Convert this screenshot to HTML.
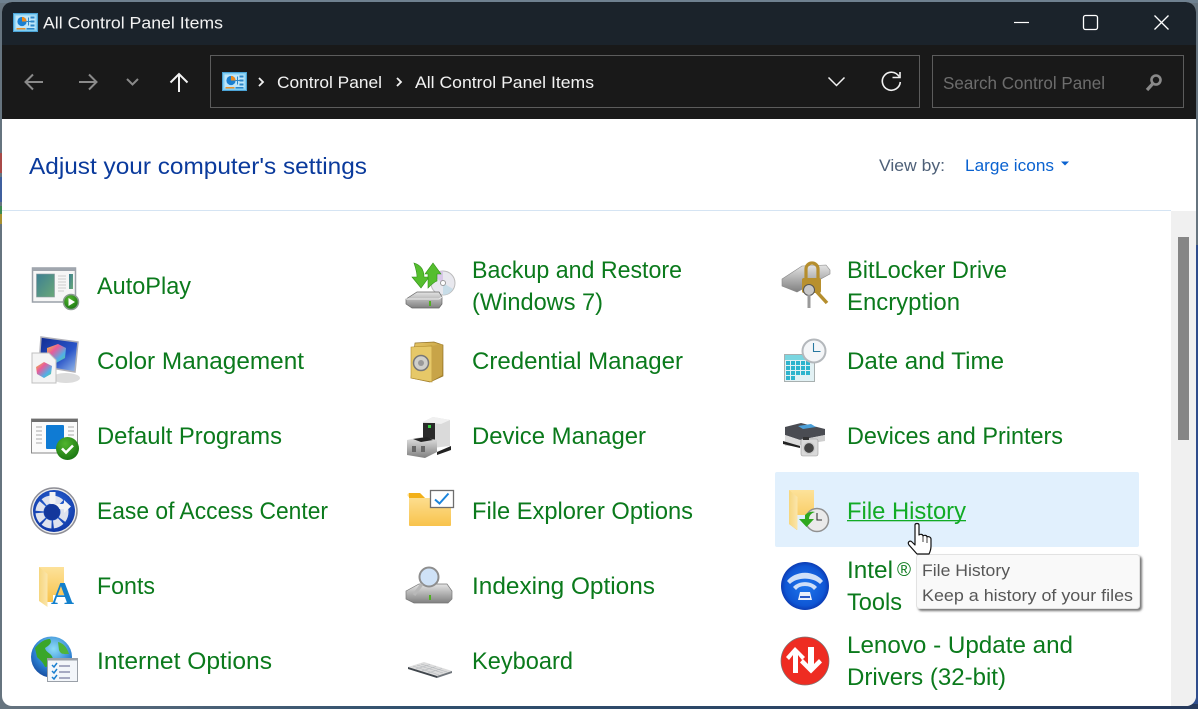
<!DOCTYPE html>
<html><head><meta charset="utf-8"><title>All Control Panel Items</title>
<style>
html,body{margin:0;padding:0;width:1198px;height:709px;overflow:hidden;background:#63717c}
svg{display:block}
text{font-family:"Liberation Sans",sans-serif}
.i{font-size:24px;fill:#0b7a1c}
.w{font-size:17px;fill:#f2f2f2}
</style></head><body>
<svg width="1198" height="709" viewBox="0 0 1198 709" xmlns="http://www.w3.org/2000/svg">
<defs>
<linearGradient id="bot" x1="0" y1="0" x2="1" y2="0"><stop offset="0" stop-color="#66747f"/><stop offset=".1" stop-color="#55687a"/><stop offset=".35" stop-color="#30506e"/><stop offset="1" stop-color="#26395c"/></linearGradient>
<linearGradient id="fold" x1="0" y1="0" x2="0" y2="1"><stop offset="0" stop-color="#fde29a"/><stop offset="1" stop-color="#f8c34c"/></linearGradient>
<linearGradient id="foldb" x1="0" y1="0" x2="1" y2="0"><stop offset="0" stop-color="#f6d67e"/><stop offset="1" stop-color="#fbe6ac"/></linearGradient>
<linearGradient id="gray" x1="0" y1="0" x2="0" y2="1"><stop offset="0" stop-color="#e4e4e4"/><stop offset="1" stop-color="#808080"/></linearGradient>
<linearGradient id="gold" x1="0" y1="0" x2="1" y2="1"><stop offset="0" stop-color="#e8c868"/><stop offset="1" stop-color="#b08a2c"/></linearGradient>
<linearGradient id="thumb" x1="0" y1="0" x2="1" y2="1"><stop offset="0" stop-color="#3d7f92"/><stop offset="1" stop-color="#6aa878"/></linearGradient>
<linearGradient id="rb" x1="0" y1="0" x2="1" y2="1"><stop offset="0" stop-color="#f0c838"/><stop offset=".35" stop-color="#e85c9a"/><stop offset=".7" stop-color="#50b0e8"/><stop offset="1" stop-color="#60d070"/></linearGradient>
<linearGradient id="mon" x1="0" y1="0" x2="1" y2="1"><stop offset="0" stop-color="#102a90"/><stop offset=".6" stop-color="#2a55c8"/><stop offset="1" stop-color="#9fc2ec"/></linearGradient>
<radialGradient id="grn" cx=".4" cy=".3" r=".8"><stop offset="0" stop-color="#52b52e"/><stop offset="1" stop-color="#14700f"/></radialGradient>
<radialGradient id="blu" cx=".5" cy=".4" r=".7"><stop offset="0" stop-color="#2f6fe0"/><stop offset="1" stop-color="#0c2f9c"/></radialGradient>
<radialGradient id="intel" cx=".5" cy=".5" r=".55"><stop offset="0" stop-color="#1f78ee"/><stop offset=".75" stop-color="#0f56d4"/><stop offset="1" stop-color="#0a2ca0"/></radialGradient>
<radialGradient id="globe" cx=".55" cy=".3" r=".8"><stop offset="0" stop-color="#8cdcf8"/><stop offset=".6" stop-color="#2a7ed0"/><stop offset="1" stop-color="#103c90"/></radialGradient>
<filter id="sh" x="-5%" y="-5%" width="112%" height="120%"><feDropShadow dx="2" dy="2" stdDeviation="1" flood-color="#555" flood-opacity=".8"/></filter>
<g id="cp">
<rect x="0" y="0" width="24" height="18" fill="#7fcdf2" stroke="#4ba3d6"/>
<rect x="2" y="2" width="20" height="14" fill="#bfe6f9"/>
<circle cx="8.5" cy="8" r="4.6" fill="#1a7fd0"/><path d="M8.5 8V3.4A4.6 4.6 0 0 1 13.1 8Z" fill="#ee8a1a"/>
<rect x="17" y="3" width="4" height="2" fill="#2c86c8"/><rect x="17" y="7" width="4" height="2" fill="#2c86c8"/><rect x="17" y="11" width="4" height="2" fill="#2c86c8"/>
<path d="M13 8h4M15 4v8" stroke="#2c86c8" fill="none"/>
<rect x="3" y="14.5" width="9" height="1.5" fill="#e8912a"/><rect x="13" y="14.5" width="8" height="1.5" fill="#2c86c8"/>
</g>
</defs>

<!-- desktop behind -->
<rect width="1198" height="709" fill="#66747f"/>
<rect x="1190" y="245" width="8" height="464" fill="#2f4d8c"/>
<rect x="0" y="704" width="1198" height="5" fill="url(#bot)"/>
<rect x="0" y="0" width="1198" height="3" fill="#6f8190"/>
<rect x="0" y="153" width="3" height="20" fill="#a84a48"/>
<rect x="0" y="177" width="3" height="25" fill="#3f5f9e"/>
<rect x="0" y="206" width="3" height="8" fill="#3c8a50"/>
<rect x="0" y="214" width="3" height="10" fill="#a89030"/>

<!-- window -->
<path d="M12 2H1186a10 10 0 0 1 10 10V696a10 10 0 0 1 -10 10H12a10 10 0 0 1 -10-10V12a10 10 0 0 1 10-10Z" fill="#fff"/>
<path d="M12 2H1186a10 10 0 0 1 10 10V45H2V12a10 10 0 0 1 10-10Z" fill="#1b232b"/>
<rect x="2" y="45" width="1194" height="74" fill="#191919"/>

<!-- title bar -->
<use href="#cp" x="13.5" y="13.5"/>
<text x="43" y="28.5" class="w" textLength="180" lengthAdjust="spacingAndGlyphs">All Control Panel Items</text>
<path d="M1014 22.500h15" stroke="#fff" stroke-width="1.200"/>
<rect x="1083.500" y="15.500" width="14" height="14" rx="2" fill="none" stroke="#fff" stroke-width="1.300"/>
<path d="M1154.500 15.500l14 14M1168.500 15.500l-14 14" stroke="#fff" stroke-width="1.300"/>

<!-- nav -->
<path d="M43 82H26M33 74.500L25.500 82l7.500 7.500" fill="none" stroke="#8a8a8a" stroke-width="2"/>
<path d="M79 82h17M89 74.500l7.500 7.500l-7.500 7.500" fill="none" stroke="#8a8a8a" stroke-width="2"/>
<path d="M127 79l5.500 5.500l5.500-5.500" fill="none" stroke="#8a8a8a" stroke-width="2"/>
<path d="M179 92V74M170.500 82.500l8.500-8.500l8.500 8.500" fill="none" stroke="#f2f2f2" stroke-width="2"/>

<rect x="210.500" y="55.500" width="709" height="52" fill="#191919" stroke="#5c5c5c"/>
<use href="#cp" x="222.500" y="72.500"/>
<path d="M259 78l4 4l-4 4" fill="none" stroke="#f2f2f2" stroke-width="1.800"/>
<text x="277" y="88" class="w" textLength="105" lengthAdjust="spacingAndGlyphs">Control Panel</text>
<path d="M397 78l4 4l-4 4" fill="none" stroke="#f2f2f2" stroke-width="1.800"/>
<text x="415" y="88" class="w" textLength="179" lengthAdjust="spacingAndGlyphs">All Control Panel Items</text>
<path d="M828.500 77.500l8 8l8-8" fill="none" stroke="#f2f2f2" stroke-width="1.500"/>
<path d="M899 76.500A9 9 0 1 0 900.300 82" fill="none" stroke="#f2f2f2" stroke-width="1.600"/>
<path d="M892.500 77.500h7.500v-5.500" fill="none" stroke="#f2f2f2" stroke-width="1.600"/>

<rect x="932.500" y="55.500" width="251" height="52" fill="#191919" stroke="#5c5c5c"/>
<text x="943" y="89" font-size="17.500" fill="#6d6d6d" textLength="162" lengthAdjust="spacingAndGlyphs">Search Control Panel</text>
<circle cx="1156" cy="80" r="4.500" fill="none" stroke="#8a8a8a" stroke-width="2.600"/>
<path d="M1152.500 84l-5.500 6" stroke="#8a8a8a" stroke-width="3.200"/>

<!-- header -->
<text x="29" y="174" font-size="23" fill="#0a3a9c" textLength="338" lengthAdjust="spacingAndGlyphs">Adjust your computer's settings</text>
<text x="879" y="171" font-size="17" fill="#4e6078" textLength="66" lengthAdjust="spacingAndGlyphs">View by:</text>
<text x="965" y="171" font-size="17" fill="#0a62d0" textLength="89" lengthAdjust="spacingAndGlyphs">Large icons</text>
<path d="M1061 161.500h8l-4 4Z" fill="#0a62d0"/>
<rect x="2" y="210" width="1169" height="1" fill="#d5e4f3"/>

<!-- scrollbar -->
<path d="M1171 211H1196V696a10 10 0 0 1-10 10H1171Z" fill="#f0f0f0"/>
<rect x="1178" y="237" width="11" height="203" fill="#868686"/>

<!-- hover -->
<rect x="775" y="472" width="364" height="75" rx="2" fill="#e1f0fd"/>

<!-- labels column 1 -->
<text x="97" y="294" class="i" textLength="94" lengthAdjust="spacingAndGlyphs">AutoPlay</text>
<text x="97" y="369" class="i" textLength="207" lengthAdjust="spacingAndGlyphs">Color Management</text>
<text x="97" y="444" class="i" textLength="185" lengthAdjust="spacingAndGlyphs">Default Programs</text>
<text x="97" y="519" class="i" textLength="231" lengthAdjust="spacingAndGlyphs">Ease of Access Center</text>
<text x="97" y="594" class="i" textLength="58" lengthAdjust="spacingAndGlyphs">Fonts</text>
<text x="97" y="669" class="i" textLength="175" lengthAdjust="spacingAndGlyphs">Internet Options</text>
<!-- column 2 -->
<text x="472" y="278" class="i" textLength="210" lengthAdjust="spacingAndGlyphs">Backup and Restore</text>
<text x="472" y="310" class="i" textLength="131" lengthAdjust="spacingAndGlyphs">(Windows 7)</text>
<text x="472" y="369" class="i" textLength="211" lengthAdjust="spacingAndGlyphs">Credential Manager</text>
<text x="472" y="444" class="i" textLength="174" lengthAdjust="spacingAndGlyphs">Device Manager</text>
<text x="472" y="519" class="i" textLength="221" lengthAdjust="spacingAndGlyphs">File Explorer Options</text>
<text x="472" y="594" class="i" textLength="183" lengthAdjust="spacingAndGlyphs">Indexing Options</text>
<text x="472" y="669" class="i" textLength="101" lengthAdjust="spacingAndGlyphs">Keyboard</text>
<!-- column 3 -->
<text x="847" y="278" class="i" textLength="160" lengthAdjust="spacingAndGlyphs">BitLocker Drive</text>
<text x="847" y="310" class="i" textLength="113" lengthAdjust="spacingAndGlyphs">Encryption</text>
<text x="847" y="369" class="i" textLength="157" lengthAdjust="spacingAndGlyphs">Date and Time</text>
<text x="847" y="444" class="i" textLength="216" lengthAdjust="spacingAndGlyphs">Devices and Printers</text>
<text x="847" y="519" class="i" style="fill:#12ab25" textLength="119" lengthAdjust="spacingAndGlyphs">File History</text>
<rect x="847" y="520" width="119" height="1.300" fill="#12ab25"/>
<text x="847" y="578" class="i" textLength="46" lengthAdjust="spacingAndGlyphs">Intel</text>
<text x="897" y="576" class="i" style="font-size:19px">®</text>
<text x="847" y="610" class="i" textLength="55" lengthAdjust="spacingAndGlyphs">Tools</text>
<text x="847" y="653" class="i" textLength="226" lengthAdjust="spacingAndGlyphs">Lenovo - Update and</text>
<text x="847" y="685" class="i" textLength="159" lengthAdjust="spacingAndGlyphs">Drivers (32-bit)</text>

<!-- AutoPlay -->
<g transform="translate(20,255)">
<rect x="12.500" y="13" width="43" height="34" fill="#f6f6f6" stroke="#9aa0a8" stroke-width="1.500"/>
<rect x="12.500" y="13" width="43" height="3" fill="#a0a6ae"/>
<rect x="16.500" y="19" width="18" height="23" fill="url(#thumb)" stroke="#8a9aa0" stroke-width=".6"/>
<path d="M38 21h8M38 24h8M38 27h8M38 30h8M38 33h8M38 36h6" stroke="#ccc"/>
<rect x="49" y="19" width="4" height="15" fill="url(#thumb)"/>
<circle cx="51" cy="47" r="7.500" fill="url(#grn)" stroke="#8a9a90" stroke-width="1.500"/>
<path d="M48.500 43l6.500 4l-6.500 4Z" fill="#fff"/>
</g>

<!-- Color Mgmt -->
<g transform="translate(20,330)">
<ellipse cx="46" cy="48" rx="14" ry="5" fill="#dcdcdc"/>
<path d="M21 7L58 12L55 42L19 36Z" fill="url(#mon)" stroke="#b0b0b8" stroke-width="1.500"/>
<path d="M27 18l11-4 8 4-1 10-9 5-9-5Z" fill="url(#rb)"/>
<path d="M12 23H29l7 7V53H12Z" fill="#f4f4f4" stroke="#c0c0c0"/>
<path d="M16 37l8-5 8 4-1 8-7 4-7-4Z" fill="url(#rb)"/>
</g>

<!-- Default programs -->
<g transform="translate(20,405)">
<rect x="11.500" y="14" width="46" height="34" fill="#fbfbfb" stroke="#8a8a8a"/>
<rect x="11.500" y="14" width="46" height="3" fill="#6e6e6e"/>
<rect x="26" y="20" width="18" height="24" rx="1" fill="#0f7bd4"/>
<path d="M16 22h6M16 26h6M16 30h6M16 34h6M16 38h6M48 22h6M48 26h6M48 30h6" stroke="#aaa"/>
<circle cx="47.500" cy="43.500" r="11.500" fill="url(#grn)"/>
<path d="M42 43.500l4 4l7-7" fill="none" stroke="#fff" stroke-width="2.600"/>
</g>

<!-- Ease of Access -->
<g transform="translate(20,480)">
<circle cx="34" cy="31" r="23" fill="#eee" stroke="#8e8e96" stroke-width="1.500"/>
<circle cx="34" cy="31" r="21" fill="url(#blu)"/>
<circle cx="32" cy="32" r="12.500" fill="none" stroke="#dfe3ee" stroke-width="8" stroke-dasharray="8 2"/>
<path d="M29.500 12h6v11l-3 3-3-3Z" fill="#f4f4f4"/>
<path d="M34 24h10v-4l7 6.500-7 6.500v-4H34Z" fill="#f4f4f4"/>
<circle cx="32" cy="32" r="8" fill="#14389c"/>
</g>

<!-- Fonts -->
<g transform="translate(20,555)">
<path d="M19 12H44V40H33V47H27Z" fill="url(#fold)"/>
<path d="M19 12l8.500 7v33L19 46Z" fill="url(#foldb)"/>
<text x="31" y="49" font-size="32" font-weight="bold" style="font-family:'Liberation Serif',serif" fill="#1380cc" textLength="23" lengthAdjust="spacingAndGlyphs">A</text>
</g>

<!-- Internet Options -->
<g transform="translate(20,630)">
<circle cx="31.500" cy="27" r="20.500" fill="url(#globe)"/>
<path d="M15 18c5-6 10-9 15-9 3 4-2 7-5 9 1 5 7 5 8 11-2 5-5 8-8 8-2-5-5-7-8-10Z" fill="#3aa62a"/>
<path d="M38 12c5 1 9 5 11 12-5 0-8 1-10-4Z" fill="#4fb43a"/>
<rect x="27.500" y="28.500" width="30" height="23" fill="#f3f6fa" stroke="#9aa0a8"/>
<rect x="27.500" y="28.500" width="30" height="2" fill="#9aa0a8"/>
<path d="M32 35l2 2 3-4M32 41l2 2 3-4M32 47l2 2 3-4" fill="none" stroke="#1a7fd0" stroke-width="1.500"/>
<path d="M39 36h11M39 42h11M39 48h11" stroke="#7a7ea0" stroke-width="1.200"/>
</g>

<!-- Backup -->
<g transform="translate(395,255)">
<circle cx="48" cy="28" r="12" fill="#e8e8ee" stroke="#bbb"/>
<path d="M48 28L38 21A12 12 0 0 1 48 16Z" fill="#d8c8e8"/><path d="M48 28L58 34A12 12 0 0 1 48 40Z" fill="#c8dde8"/>
<circle cx="48" cy="28" r="2.500" fill="#fff" stroke="#999"/>
<path d="M11 44l11-7h22l3 5v7l-3 4H17l-6-4Z" fill="url(#gray)" stroke="#666" stroke-width=".7"/>
<path d="M11 44h33l3-2" stroke="#eee" fill="none"/>
<rect x="34" y="46" width="2" height="5" fill="#4fb020"/>
<path d="M19 8c7 2 10 7 10 14h5l-8 11-9-11h5c0-4-1-8-3-14Z" fill="#55be2e" stroke="#2f8f18" stroke-width=".6"/>
<path d="M33 33V19h-3l8-11 8 11h-4v7c-3 1-6 4-9 7Z" fill="#55be2e" stroke="#2f8f18" stroke-width=".6"/>
</g>

<!-- Credential -->
<g transform="translate(395,330)">
<path d="M20 13l19-1 9 3v31l-13 6-19-4Z" fill="url(#gold)" stroke="#94752c" stroke-width=".7"/>
<path d="M16 17l21 -1v36l-21-4Z" fill="#e6c868" stroke="#b08a2c" stroke-width=".6"/>
<circle cx="26" cy="33" r="7.500" fill="#cfcfca" stroke="#777" stroke-width="1.500"/>
<circle cx="26" cy="33" r="3" fill="#999"/>
<path d="M37 16l10-2v31l-10 6Z" fill="#c8a448"/>
</g>

<!-- Device Manager -->
<g transform="translate(395,405)">
<path d="M28 17l10-5 17 3v26l-27 3Z" fill="#dadada"/>
<path d="M28 17l10-5 17 3-9 4Z" fill="#f0f0f0"/><path d="M28 18h12v24H28Z" fill="#2a2a2a"/>
<rect x="33" y="20" width="3" height="3" fill="#35d040"/>
<path d="M42 47l14-6v4l-14 5Z" fill="#222"/>
<path d="M12 35l14-3 16 3v12l-12 6-18-3Z" fill="url(#gray)"/>
<path d="M18 34l14-2 6 3-12 2Z" fill="#222"/>
<rect x="17" y="41" width="4" height="6" fill="#666"/><rect x="26" y="41" width="4" height="6" fill="#666"/>
</g>

<!-- File explorer options -->
<g transform="translate(395,480)">
<path d="M14 17a1 1 0 0 1 1-4h10l5 5h26v27a1 1 0 0 1-1 1H15a1 1 0 0 1-1-1Z" fill="url(#fold)"/>
<path d="M14 13h11l5 5h-16Z" fill="#f2b018"/>
<rect x="35.500" y="10.500" width="23" height="17" fill="#fff" stroke="#6e6e6e" stroke-width="1.300"/>
<path d="M40 19.500l4.500 4l9-10" fill="none" stroke="#1a84dc" stroke-width="2"/>
</g>

<!-- Indexing -->
<g transform="translate(395,555)">
<path d="M11 36l13-7h28l5 7v8l-4 4H19l-8-4Z" fill="url(#gray)" stroke="#777" stroke-width=".7"/>
<rect x="34" y="40" width="2" height="5" fill="#4fb020"/>
<circle cx="34" cy="22" r="9.500" fill="#cfe2f7" stroke="#8e8e8e" stroke-width="2"/>
<path d="M27 29l-8 11" stroke="#b8b8b8" stroke-width="3.200"/>
</g>

<!-- Keyboard -->
<g transform="translate(395,641)">
<path d="M13 26l16-5 28 9-15 5Z" fill="#dcdcdc"/>
<path d="M13 26l29 9v2l-29-9Z" fill="#40464c"/><path d="M42 35l15-5v2l-15 5Z" fill="#70767c"/>
<path d="M18 25l26 9M22 24l26 8M26 23l26 8M21 28l14-4.500M27 30l14-4.500M33 32l14-4.500" stroke="#b4b8bc" stroke-width=".6"/>
</g>

<!-- BitLocker -->
<g transform="translate(770,255)">
<path d="M12 24l20-13 24-1 4 5 0 4-33 18-15-6Z" fill="url(#gray)" stroke="#888" stroke-width=".6"/>
<path d="M36 25V14a6 6 0 0 1 12 0v11" fill="none" stroke="#b58e2e" stroke-width="3.200"/>
<rect x="32" y="23" width="19" height="15" rx="2" fill="#b8902e"/>
<path d="M46 36l11 12" stroke="#b58e2e" stroke-width="3.500"/>
<circle cx="39" cy="35" r="5.500" fill="#c8c8c8" stroke="#555"/>
<path d="M39 40v13" stroke="#999" stroke-width="3"/>
</g>

<!-- Date Time -->
<g transform="translate(770,330)">
<rect x="14.500" y="24.500" width="30" height="27" fill="#e2f1f4" stroke="#a8b0b0"/>
<rect x="15" y="25" width="29" height="5" fill="#7ad6e0"/>
<g fill="#2eb4cd">
<rect x="16" y="31" width="4" height="4"/><rect x="21" y="31" width="4" height="4"/><rect x="26" y="31" width="4" height="4"/><rect x="31" y="31" width="4" height="4"/><rect x="36" y="31" width="4" height="4"/>
<rect x="16" y="36" width="4" height="4"/><rect x="21" y="36" width="4" height="4"/><rect x="26" y="36" width="4" height="4"/><rect x="31" y="36" width="4" height="4"/><rect x="36" y="36" width="4" height="4"/>
<rect x="16" y="41" width="4" height="4"/><rect x="21" y="41" width="4" height="4"/><rect x="26" y="41" width="4" height="4"/><rect x="31" y="41" width="4" height="4"/><rect x="36" y="41" width="4" height="4"/>
<rect x="16" y="46" width="4" height="4"/><rect x="21" y="46" width="4" height="4"/>
</g>
<circle cx="44" cy="21" r="11.500" fill="#f4f6f8" stroke="#b4b8bc" stroke-width="2"/>
<path d="M43.500 13v8.500h7" fill="none" stroke="#2878a0" stroke-width="1.100"/>
</g>

<!-- Devices printers -->
<g transform="translate(770,405)">
<path d="M15 22l16-4 24 6v6l-25 5-15-5Z" fill="#4a4c52"/>
<path d="M28 21l13-2 5 3-13 2Z" fill="#4a9fd8"/>
<path d="M15 30l15 5v6H15Z" fill="#dcdcdc"/><path d="M30 35l25-5v6l-25 4Z" fill="#cfcfcf"/>
<path d="M13 36l17 5v2l-17-4Z" fill="#222"/>
<rect x="31" y="34" width="17" height="17" rx="2" fill="#d9d9d9" stroke="#999" stroke-width=".6"/>
<circle cx="39" cy="43" r="5.500" fill="#444" stroke="#ccc" stroke-width="1.300"/>
<rect x="33" y="32" width="6" height="3" fill="#333"/>
</g>

<!-- File History -->
<g transform="translate(770,480)">
<path d="M19 10H44V35H27V50L19 44Z" fill="url(#fold)"/>
<path d="M19 10l8.500 7v33L19 44Z" fill="url(#foldb)"/>
<circle cx="47" cy="40" r="11.500" fill="#eaeaea" stroke="#909090" stroke-width="1.500"/>
<path d="M47 33v7h5" fill="none" stroke="#333" stroke-width="1.100"/>
<path d="M29 39h6v-4c3-3 7-4 10-3-4 1-6 4-6 7h5l-7.500 8Z" fill="#2ea81e"/>
</g>

<!-- Intel -->
<g transform="translate(770,555)">
<circle cx="35" cy="31" r="24" fill="url(#intel)"/>
<path d="M17 26a21 17 0 0 1 36 0l-3 3a18 12 0 0 0-30 0Z" fill="#cfe0f8"/>
<path d="M23 32a14 10 0 0 1 24 0l-3 3a10 7 0 0 0-18 0Z" fill="#cfe0f8"/>
<path d="M30 37h10l2 8H28Z" fill="#eaf0fc"/>
<rect x="30" y="41" width="10" height="2" fill="#2a5ac8"/>
</g>

<!-- Lenovo -->
<g transform="translate(770,630)">
<circle cx="35" cy="31" r="24" fill="#ee2c22" stroke="#777" stroke-width=".7"/>
<path d="M25 17l-9 10 3 3 4-5v18h5V25l4 5 3-3Z" fill="#fff"/>
<path d="M38 17h6v17l5-5 3 3.500-11 11-11-11 3-3.500 5 5Z" fill="#fff"/>
</g>

<!-- tooltip -->
<g filter="url(#sh)">
<rect x="916.500" y="554.500" width="223" height="54" rx="3" fill="#f9f9f9" stroke="#e2e2e2"/>
</g>
<text x="922" y="576" font-size="17" fill="#575757" textLength="88" lengthAdjust="spacingAndGlyphs">File History</text>
<text x="922" y="601" font-size="17" fill="#575757" textLength="211" lengthAdjust="spacingAndGlyphs">Keep a history of your files</text>

<!-- cursor -->
<path d="M915 525c0-2 4-2 4 0V535c1-1 4-1 4 1 1-1 4-1 4 1 1-1 4 0 4 2V546c0 4-1 6-2 8H917l-8-9c-2-3 1-5 3-3l3 3Z" fill="#fff" stroke="#111" stroke-width="1.200" stroke-linejoin="round"/>
<path d="M923 536v6M927 537v6" stroke="#111" stroke-width=".8"/>
</svg>
</body></html>
